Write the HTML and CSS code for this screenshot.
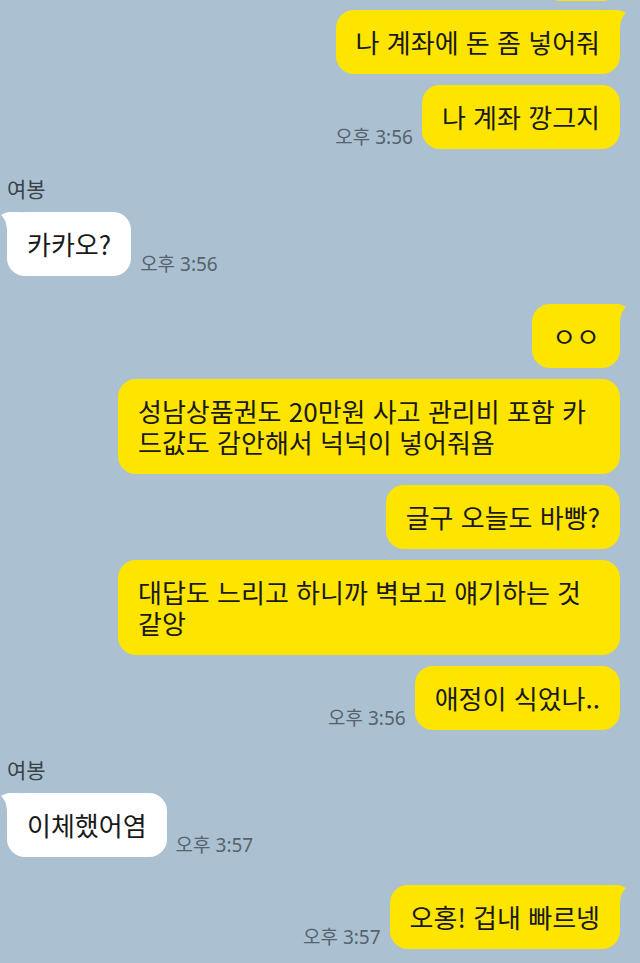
FILE: index.html
```html
<!DOCTYPE html>
<html lang="ko">
<head>
    <meta charset="UTF-8">
    <meta name="viewport" content="width=device-width, initial-scale=1.0">
    <title>여봉</title>
    <link rel="stylesheet" href="styles.css">
</head>
<body>
    <div class="chat">
        <div class="row me cut">
            <div class="bubble stub"></div>
        </div>

        <div class="row me">
            <div class="bubble">
                <svg class="tail" viewBox="0 0 20 20"><path d="M0 0H12Q16 0.5 20 3Q15 7 14 17V20H0Z"/></svg>
                나 계좌에 돈 좀 넣어줘
            </div>
        </div>
        <div class="row me">
            <span class="time">오후 3:56</span>
            <div class="bubble">나 계좌 깡그지</div>
        </div>

        <div class="name">여봉</div>
        <div class="row you">
            <div class="bubble">
                <svg class="tail" viewBox="0 0 20 20"><path d="M0 0H12Q16 0.5 20 3Q15 7 14 17V20H0Z"/></svg>
                카카오?
            </div>
            <span class="time">오후 3:56</span>
        </div>

        <div class="row me group">
            <div class="bubble">
                <svg class="tail" viewBox="0 0 20 20"><path d="M0 0H12Q16 0.5 20 3Q15 7 14 17V20H0Z"/></svg>
                ㅇㅇ
            </div>
        </div>
        <div class="row me">
            <div class="bubble">성남상품권도 20만원 사고 관리비 포함 카드값도 감안해서 넉넉이 넣어줘욤</div>
        </div>
        <div class="row me">
            <div class="bubble">글구 오늘도 바빵?</div>
        </div>
        <div class="row me">
            <div class="bubble">대답도 느리고 하니까 벽보고 얘기하는 것 같앙</div>
        </div>
        <div class="row me">
            <span class="time">오후 3:56</span>
            <div class="bubble">애정이 식었나..</div>
        </div>

        <div class="name">여봉</div>
        <div class="row you">
            <div class="bubble">
                <svg class="tail" viewBox="0 0 20 20"><path d="M0 0H12Q16 0.5 20 3Q15 7 14 17V20H0Z"/></svg>
                이체했어염
            </div>
            <span class="time">오후 3:57</span>
        </div>

        <div class="row me group">
            <span class="time">오후 3:57</span>
            <div class="bubble">
                <svg class="tail" viewBox="0 0 20 20"><path d="M0 0H12Q16 0.5 20 3Q15 7 14 17V20H0Z"/></svg>
                오홍! 겁내 빠르넹
            </div>
        </div>
    </div>
</body>
</html>
```

FILE: styles.css
```css
html, body {
    margin: 0;
    height: 100%;
    overflow: hidden;
}
body {
    background-color: #abc1d1;
    font-family: "Noto Sans CJK KR", "Noto Sans", sans-serif;
    color: #191919;
}
.chat {
    display: flex;
    flex-direction: column;
    padding: 0 20px 0 7px;
}
.row {
    display: flex;
    align-items: flex-end;
    gap: 9px;
    margin-top: 11px;
}
.row.me {
    justify-content: flex-end;
}
.row.you {
    justify-content: flex-start;
    margin-top: 12px;
}
.row.group {
    margin-top: 28px;
}
.row.cut {
    margin-top: -63px;
    margin-bottom: -2px;
}
.name {
    margin-top: 28px;
    font-size: 21px;
    line-height: 23px;
    color: #3a4148;
}
.bubble {
    position: relative;
    max-width: 462px;
    padding: 16px 20px 17px;
    border-radius: 18px;
    background: #fee500;
    font-size: 26px;
    line-height: 31px;
}
.bubble.stub {
    width: 37px;
    height: 31px;
}
.you .bubble {
    background: #ffffff;
}
.tail {
    position: absolute;
    top: 0;
    right: -6px;
    width: 20px;
    height: 20px;
    fill: #fee500;
}
.you .tail {
    right: auto;
    left: -6px;
    transform: scaleX(-1);
    fill: #ffffff;
}
.time {
    flex-shrink: 0;
    font-family: "Noto Sans", "Noto Sans CJK KR", sans-serif;
    font-size: 19px;
    line-height: 22px;
    color: #56636e;
    padding-bottom: 1px;
}
```
